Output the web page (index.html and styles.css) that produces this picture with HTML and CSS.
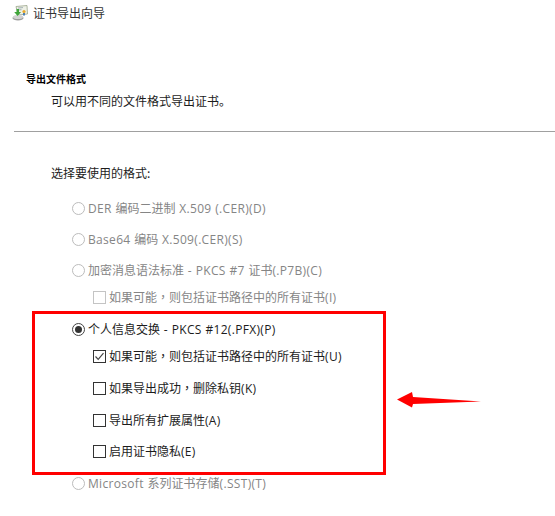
FILE: index.html
```html
<!DOCTYPE html>
<html lang="zh-CN">
<head>
<meta charset="utf-8">
<title>证书导出向导</title>
<link rel="stylesheet" href="styles.css">
</head>
<body>
<div class="page">
  <header class="title">
    <svg class="wizard-icon" width="16" height="16" viewBox="0 0 16 16">
      <path d="M4 1.5 15 0.5 15.5 9 6 10Z" fill="#eef1e6" stroke="#9aa58c" stroke-width=".8"/>
      <path d="M6 3 11 2.6M6 5 9.5 4.7" stroke="#8fa0a8" stroke-width=".8"/>
      <circle cx="12" cy="6.5" r="1.6" fill="#e8a92c"/>
      <path d="M11 8h2v2.5h-2z" fill="#4d7fb5"/>
      <ellipse cx="6" cy="13" rx="5.5" ry="2.4" fill="#9c9c9c"/>
      <ellipse cx="6" cy="12" rx="5" ry="2" fill="#d2d2d2"/>
      <path d="M4.6 4 7 4 7 7 9 7 5.6 11 2.2 7 4.6 7Z" fill="#3fa53a"/>
    </svg>
    <span>证书导出向导</span>
  </header>
  <section class="intro">
    <h1 class="heading">导出文件格式</h1>
    <p class="sub">可以用不同的文件格式导出证书。</p>
  </section>
  <hr class="rule">
  <p class="label">选择要使用的格式:</p>
  <div class="options">
    <div class="row r1 off"><i class="radio"></i><span><span class="lat">DER </span>编码二进制<span class="lat"> X.509 (.CER)(D)</span></span></div>
    <div class="row r2 off"><i class="radio"></i><span><span class="lat">Base64 </span>编码<span class="lat"> X.509(.CER)(S)</span></span></div>
    <div class="row r2 off"><i class="radio"></i><span>加密消息语法标准<span class="lat"> - PKCS #7 </span>证书<span class="lat">(.P7B)(C)</span></span></div>
    <div class="row r3 off sub-row"><i class="check"></i><span>如果可能<span class="comma" lang="zh-TW">，</span>则包括证书路径中的所有证书<span class="lat">(I)</span></span></div>
    <div class="row r4"><i class="radio on"></i><span>个人信息交换<span class="lat"> - PKCS #12(.PFX)(P)</span></span></div>
    <div class="row r5 sub-row"><i class="check">
      <svg width="13" height="13" viewBox="0 0 13 13"><path d="M2.5 6.5 5.2 9.3 10.5 3.2" fill="none" stroke="#444" stroke-width="1.2"/></svg>
    </i><span>如果可能<span class="comma" lang="zh-TW">，</span>则包括证书路径中的所有证书<span class="lat">(U)</span></span></div>
    <div class="row r6 sub-row"><i class="check"></i><span>如果导出成功<span class="comma" lang="zh-TW">，</span>删除私钥<span class="lat">(K)</span></span></div>
    <div class="row r7 sub-row"><i class="check"></i><span>导出所有扩展属性<span class="lat">(A)</span></span></div>
    <div class="row r8 sub-row"><i class="check"></i><span>启用证书隐私<span class="lat">(E)</span></span></div>
    <div class="row r9 off"><i class="radio"></i><span><span class="lat">Microsoft </span>系列证书存储<span class="lat">(.SST)(T)</span></span></div>
  </div>
  <div class="highlight"></div>
  <svg class="arrow" width="88" height="20" viewBox="0 0 88 20">
    <path d="M1 8.5 16 1 17 6 85 10.5 17 13 16 16.5Z" fill="#ff0000"/>
  </svg>
</div>
</body>
</html>
```
FILE: styles.css
```css
* { box-sizing: border-box; }
html, body { margin: 0; background: #fff; }
.page {
  position: relative;
  width: 555px;
  height: 516px;
  overflow: hidden;
  font: 12px/18px "Noto Sans CJK SC", sans-serif;
  color: #1c1c1c;
}
.lat { font-family: "Open Sans", sans-serif; letter-spacing: .32px; word-spacing: .3px; }
.comma { font-family: "Noto Sans CJK TC", sans-serif; }
.title {
  display: flex;
  align-items: center;
  gap: 5px;
  height: 18px;
  margin-top: 4px;
  padding-left: 12px;
  color: #333;
}
.intro { margin-top: 48px; }
.heading {
  margin: 0;
  padding-left: 26px;
  height: 18px;
  font-size: 10px;
  font-weight: 700;
  line-height: 18px;
  color: #000;
}
.sub { margin: 4px 0 0; padding-left: 51px; }
.rule {
  margin: 21px 0 0 14px;
  border: 0;
  height: 1px;
  background: #a0a0a0;
}
.label { margin: 32px 0 0; padding-left: 51px; }
.options { margin-top: 17px; padding-left: 72px; }
.row { display: flex; align-items: center; height: 18px; gap: 3px; }
.off { color: #858585; }
.r2 { margin-top: 13px; }
.r3 { margin-top: 9px; }
.r4 { margin-top: 14px; }
.r5 { margin-top: 9px; }
.r6 { margin-top: 14px; }
.r7 { margin-top: 14px; }
.r8 { margin-top: 13px; }
.r9 { margin-top: 14px; }
.sub-row { padding-left: 21px; }
.radio {
  position: relative;
  flex: none;
  width: 13px;
  height: 13px;
  border: 1px solid #bcbcbc;
  border-radius: 50%;
}
.radio.on { border-color: #444; }
.radio.on::after {
  content: "";
  position: absolute;
  inset: 2px;
  border-radius: 50%;
  background: #333;
}
.check {
  display: block;
  flex: none;
  width: 13px;
  height: 13px;
  border: 1px solid #333;
  background: #fff;
}
.check svg { display: block; margin: -1px; }
.off .check { border-color: #c4c4c4; }
.highlight {
  position: absolute;
  left: 32px;
  top: 311px;
  width: 354px;
  height: 164px;
  border: 3px solid #ff0000;
  pointer-events: none;
}
.arrow { position: absolute; left: 396px; top: 391px; }
```
